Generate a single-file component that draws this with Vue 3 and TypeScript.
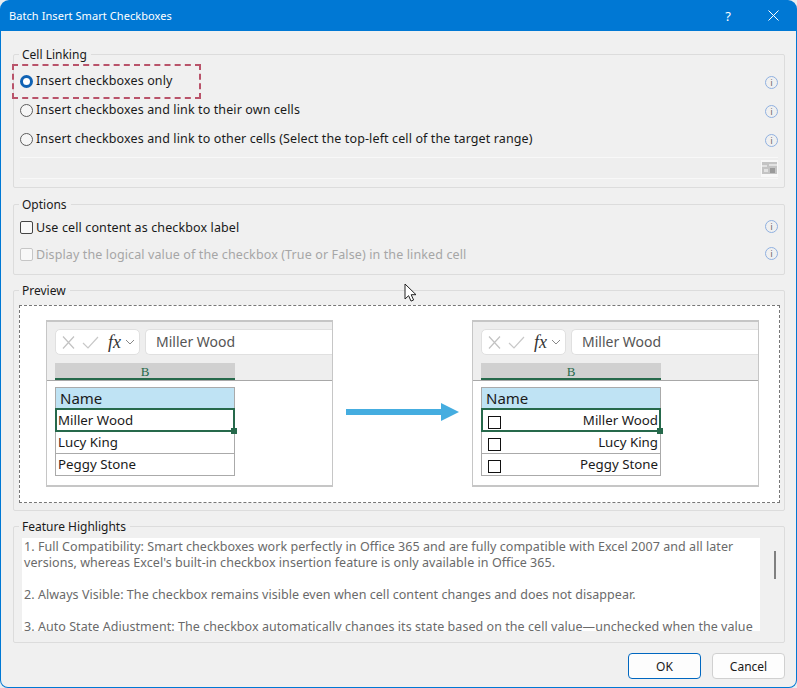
<script setup lang="ts">
interface PaneRow {
  name: string
}

const rows: PaneRow[] = [{ name: 'Miller Wood' }, { name: 'Lucy King' }, { name: 'Peggy Stone' }]
const panes = [{ id: 'before', checks: false }, { id: 'after', checks: true }]
</script>

<template>
  <div class="window">
    <header class="titlebar">
      <span class="titlebar__text">Batch Insert Smart Checkboxes</span>
      <span class="titlebar__help">?</span>
      <svg class="titlebar__close" width="11" height="11" viewBox="0 0 11 11">
        <path d="M0.5 0.5l10 10M10.5 0.5l-10 10" stroke="#fff" stroke-width="1" fill="none" />
      </svg>
    </header>

    <main class="content">
      <fieldset class="group group--linking">
        <legend>Cell Linking</legend>
        <div class="row row--tall">
          <span class="radio radio--on"></span>
          <span class="label">Insert checkboxes only</span>
          <span class="info">i</span>
          <span class="highlight"></span>
        </div>
        <div class="row row--tall">
          <span class="radio"></span>
          <span class="label">Insert checkboxes and link to their own cells</span>
          <span class="info">i</span>
        </div>
        <div class="row row--tall">
          <span class="radio"></span>
          <span class="label">Insert checkboxes and link to other cells (Select the top-left cell of the target range)</span>
          <span class="info">i</span>
        </div>
        <div class="range">
          <span class="range__btn">
            <svg width="15" height="12" viewBox="0 0 15 12">
              <rect width="15" height="12" fill="#c4c4c4" />
              <path d="M0 3h5v2H0zM7 2h8v2H7zM2 7h4v3H2z" fill="#e2e2e2" />
              <path d="M8 6h5v5H8z" fill="#9a9a9a" />
            </svg>
          </span>
        </div>
      </fieldset>

      <fieldset class="group group--options">
        <legend>Options</legend>
        <div class="row row--option">
          <span class="check"></span>
          <span class="label">Use cell content as checkbox label</span>
          <span class="info info--up">i</span>
        </div>
        <div class="row row--option row--disabled">
          <span class="check"></span>
          <span class="label">Display the logical value of the checkbox (True or False) in the linked cell</span>
          <span class="info info--up">i</span>
        </div>
      </fieldset>

      <fieldset class="group group--preview">
        <legend>Preview</legend>
        <div class="stage">
          <template v-for="pane in panes" :key="pane.id">
            <div class="pane">
              <div class="ribbon">
                <div class="formula">
                  <div class="formula__tools">
                    <svg width="15" height="13" viewBox="0 0 15 13">
                      <path d="M2 0.5l11 12M13 0.5l-11 12" stroke="#c2c2c2" stroke-width="1.2" fill="none" />
                    </svg>
                    <svg width="17" height="13" viewBox="0 0 17 13">
                      <path d="M1 7l5 5L16 1" stroke="#c8c8c8" stroke-width="1.2" fill="none" />
                    </svg>
                    <span class="formula__fx">fx</span>
                    <svg width="10" height="6" viewBox="0 0 10 6">
                      <path d="M1 1l4 4 4-4" stroke="#888" stroke-width="1" fill="none" />
                    </svg>
                  </div>
                  <div class="formula__value">Miller Wood</div>
                </div>
                <div class="colhead">B</div>
              </div>
              <div class="sheet">
                <div class="sheet__head">Name</div>
                <div
                  v-for="(row, i) in rows"
                  :key="row.name"
                  class="sheet__row"
                  :class="{ 'is-selected': i === 0, 'is-right': pane.checks }"
                >
                  <span v-if="pane.checks" class="sheet__box"></span>
                  <span>{{ row.name }}</span>
                </div>
              </div>
            </div>
            <svg v-if="!pane.checks" class="arrow" width="113" height="18" viewBox="0 0 113 18">
              <path d="M0 6h95V0l18 9-18 9v-6H0z" fill="#45ade0" />
            </svg>
          </template>
        </div>
      </fieldset>

      <fieldset class="group group--features">
        <legend>Feature Highlights</legend>
        <div class="features">
          <div class="features__text">
            <p>1. Full Compatibility: Smart checkboxes work perfectly in Office 365 and are fully compatible with Excel 2007 and all later versions, whereas Excel's built-in checkbox insertion feature is only available in Office 365.</p>
            <p>2. Always Visible: The checkbox remains visible even when cell content changes and does not disappear.</p>
            <p>3. Auto State Adjustment: The checkbox automatically changes its state based on the cell value—unchecked when the value</p>
          </div>
          <div class="features__bar"><span class="features__thumb"></span></div>
        </div>
      </fieldset>

      <footer class="actions">
        <button class="btn btn--primary" type="button">OK</button>
        <button class="btn" type="button">Cancel</button>
      </footer>

      <svg class="cursor" width="13" height="19" viewBox="0 0 13 19">
        <path d="M1 1v15l3.6-3.3 2.4 5.4 2.6-1.1-2.4-5.3h4.8z" fill="#fff" stroke="#222" stroke-width="1" />
      </svg>
    </main>
  </div>
</template>

<style>
html,
body {
  margin: 0;
  background: #e9edf0;
}
</style>

<style scoped>
.window {
  position: relative;
  width: 797px;
  height: 688px;
  box-sizing: border-box;
  display: flex;
  flex-direction: column;
  padding: 0 1px 1px;
  background: #0078d4;
  border-radius: 9px 9px 8px 8px;
  overflow: hidden;
  font-family: "Noto Sans", sans-serif;
  font-size: 12px;
  color: #1a1a1a;
}

.titlebar {
  flex: none;
  height: 31px;
  display: flex;
  align-items: center;
  padding: 0 17px 0 8px;
  color: #fff;
}

.titlebar__text {
  flex: 1;
  font-size: 11px;
  letter-spacing: 0.07px;
}

.titlebar__help {
  margin-right: 37px;
  font-size: 13px;
}

.content {
  flex: 1;
  display: flex;
  flex-direction: column;
  gap: 8px;
  padding: 15px 11px 0 12px;
  background: #f0f0f0;
  border-radius: 0 0 7px 7px;
}

.group {
  margin: 0;
  padding: 0 6px;
  min-width: 0;
  box-sizing: border-box;
  border: 1px solid #dcdcdc;
  border-radius: 2px;
}

.group legend {
  margin-left: -1px;
  padding: 0 4px 0 3px;
  height: 16px;
  line-height: 18px;
}

.group--linking {
  height: 142px;
  padding-top: 5px;
}

.group--options {
  height: 79px;
  padding-top: 2px;
}

.group--preview {
  height: 229px;
  margin-top: -1px;
  padding-top: 7px;
}

.group--features {
  height: 125px;
  margin-top: -1px;
  padding-top: 4px;
}

.row {
  position: relative;
  display: flex;
  align-items: center;
  gap: 3px;
}

.row--tall {
  height: 29px;
}

.row--tall .label {
  margin-top: -2px;
}

.row--option {
  height: 27px;
}

.row--disabled {
  color: #a6a6a6;
}

.label {
  flex: 1;
  font-size: 12.5px;
  letter-spacing: 0.12px;
}

.radio {
  width: 13px;
  height: 13px;
  box-sizing: border-box;
  border: 1px solid #5c5c5c;
  border-radius: 50%;
  background: #f6f6f6;
}

.radio--on {
  border: 3.5px solid #0f62b4;
  background: #fff;
}

.check {
  width: 13px;
  height: 13px;
  box-sizing: border-box;
  border: 1px solid #444;
  border-radius: 2px;
  background: #f8f8f8;
}

.row--disabled .check {
  border-color: #c6c6c6;
}

.info {
  width: 11px;
  height: 11px;
  margin-top: 2px;
  border: 1px solid #8fb0e0;
  border-radius: 50%;
  text-align: center;
  font-size: 8px;
  line-height: 11px;
  color: #555;
}

.info--up {
  margin-top: -3px;
}

.highlight {
  position: absolute;
  left: -8px;
  top: -3px;
  width: 185px;
  height: 31px;
  border: 2px dashed #b9536a;
}

.range {
  height: 20px;
  margin-top: 3px;
  display: flex;
  align-items: center;
  justify-content: flex-end;
  border-top: 1px solid #f8f8f8;
  border-bottom: 1px solid #f8f8f8;
  background: #eeeeee;
}

.range__btn {
  width: 17px;
  height: 17px;
  display: flex;
  align-items: center;
  justify-content: center;
  background: #f8f8f8;
}

.stage {
  height: 198px;
  box-sizing: border-box;
  margin: 0 -2px 0 -1px;
  display: flex;
  align-items: flex-start;
  justify-content: space-between;
  padding: 14px 20px 0 26px;
  background: #fff;
  border: 1px dashed #777;
}

.pane {
  width: 287px;
  height: 167px;
  box-sizing: border-box;
  border: 1px solid #c6c6c6;
  border-top-width: 2px;
  border-bottom-width: 2px;
  background: #fff;
}

.arrow {
  flex: none;
  margin-top: 83px;
}

.ribbon {
  height: 59px;
  box-sizing: border-box;
  padding-top: 7px;
  padding-left: 8px;
  background: #eeeeee;
  border-bottom: 1px solid #a8a8a8;
}

.formula {
  display: flex;
  gap: 5px;
  height: 26px;
}

.formula__tools {
  flex: none;
  width: 85px;
  box-sizing: border-box;
  display: flex;
  align-items: center;
  padding: 0 2px 0 5px;
  gap: 6px;
  background: #fff;
  border: 1px solid #e0e0e0;
  border-radius: 5px;
}

.formula__fx {
  margin-left: 3px;
  margin-right: -2px;
  font-family: "Liberation Serif", serif;
  font-style: italic;
  font-size: 18px;
  color: #333;
}

.formula__value {
  flex: 1;
  padding-left: 10px;
  background: #fff;
  border: 1px solid #e0e0e0;
  border-right: 0;
  border-radius: 5px 0 0 5px;
  font-size: 14px;
  line-height: 24px;
  color: #555;
}

.colhead {
  width: 180px;
  height: 17px;
  box-sizing: border-box;
  margin-top: 8px;
  background: #d0d0d0;
  border-bottom: 2px solid #26694b;
  text-align: center;
  font-family: "Liberation Serif", serif;
  font-size: 13px;
  line-height: 17px;
  color: #26694b;
}

.sheet {
  width: 180px;
  box-sizing: border-box;
  margin: 6px 0 0 8px;
  border: 1px solid #aaa;
}

.sheet__head {
  height: 21px;
  padding-left: 4px;
  background: #bfe3f4;
  font-size: 15px;
  line-height: 21px;
}

.sheet__row {
  position: relative;
  height: 22px;
  box-sizing: border-box;
  display: flex;
  align-items: center;
  padding: 0 2px 2px;
  border-top: 1px solid #aaa;
  font-size: 13.3px;
}

.sheet__row.is-right {
  justify-content: space-between;
}

.sheet__row.is-selected {
  z-index: 1;
  outline: 2px solid #26694b;
  outline-offset: -1px;
}

.sheet__row.is-selected::after {
  content: "";
  position: absolute;
  right: -3px;
  bottom: -3px;
  width: 6px;
  height: 6px;
  background: #26694b;
}

.sheet__box {
  width: 13px;
  height: 13px;
  box-sizing: border-box;
  margin: 5px 0 0 4px;
  border: 1px solid #111;
}

.features {
  display: flex;
  height: 93px;
  margin-left: 2px;
}

.features__text {
  flex: none;
  width: 738px;
  box-sizing: border-box;
  height: 93px;
  overflow: hidden;
  padding: 1px 4px 0 2px;
  background: #fff;
  font-size: 12.5px;
  letter-spacing: 0.05px;
  line-height: 16px;
  color: #6a6a6a;
}

.features__text p {
  margin: 0 0 16px;
}

.features__bar {
  flex: 1;
  padding: 13px 0 0 14px;
}

.features__thumb {
  display: block;
  width: 2px;
  height: 28px;
  background: #808080;
}

.actions {
  display: flex;
  justify-content: flex-end;
  gap: 11px;
  margin-top: 2px;
}

.btn {
  width: 73px;
  height: 26px;
  padding: 0;
  background: #fdfdfd;
  border: 1px solid #d0d0d0;
  border-radius: 4px;
  font: inherit;
  color: #1a1a1a;
}

.btn--primary {
  border: 1.5px solid #0067c0;
}

.cursor {
  position: absolute;
  left: 404px;
  top: 283px;
}
</style>
